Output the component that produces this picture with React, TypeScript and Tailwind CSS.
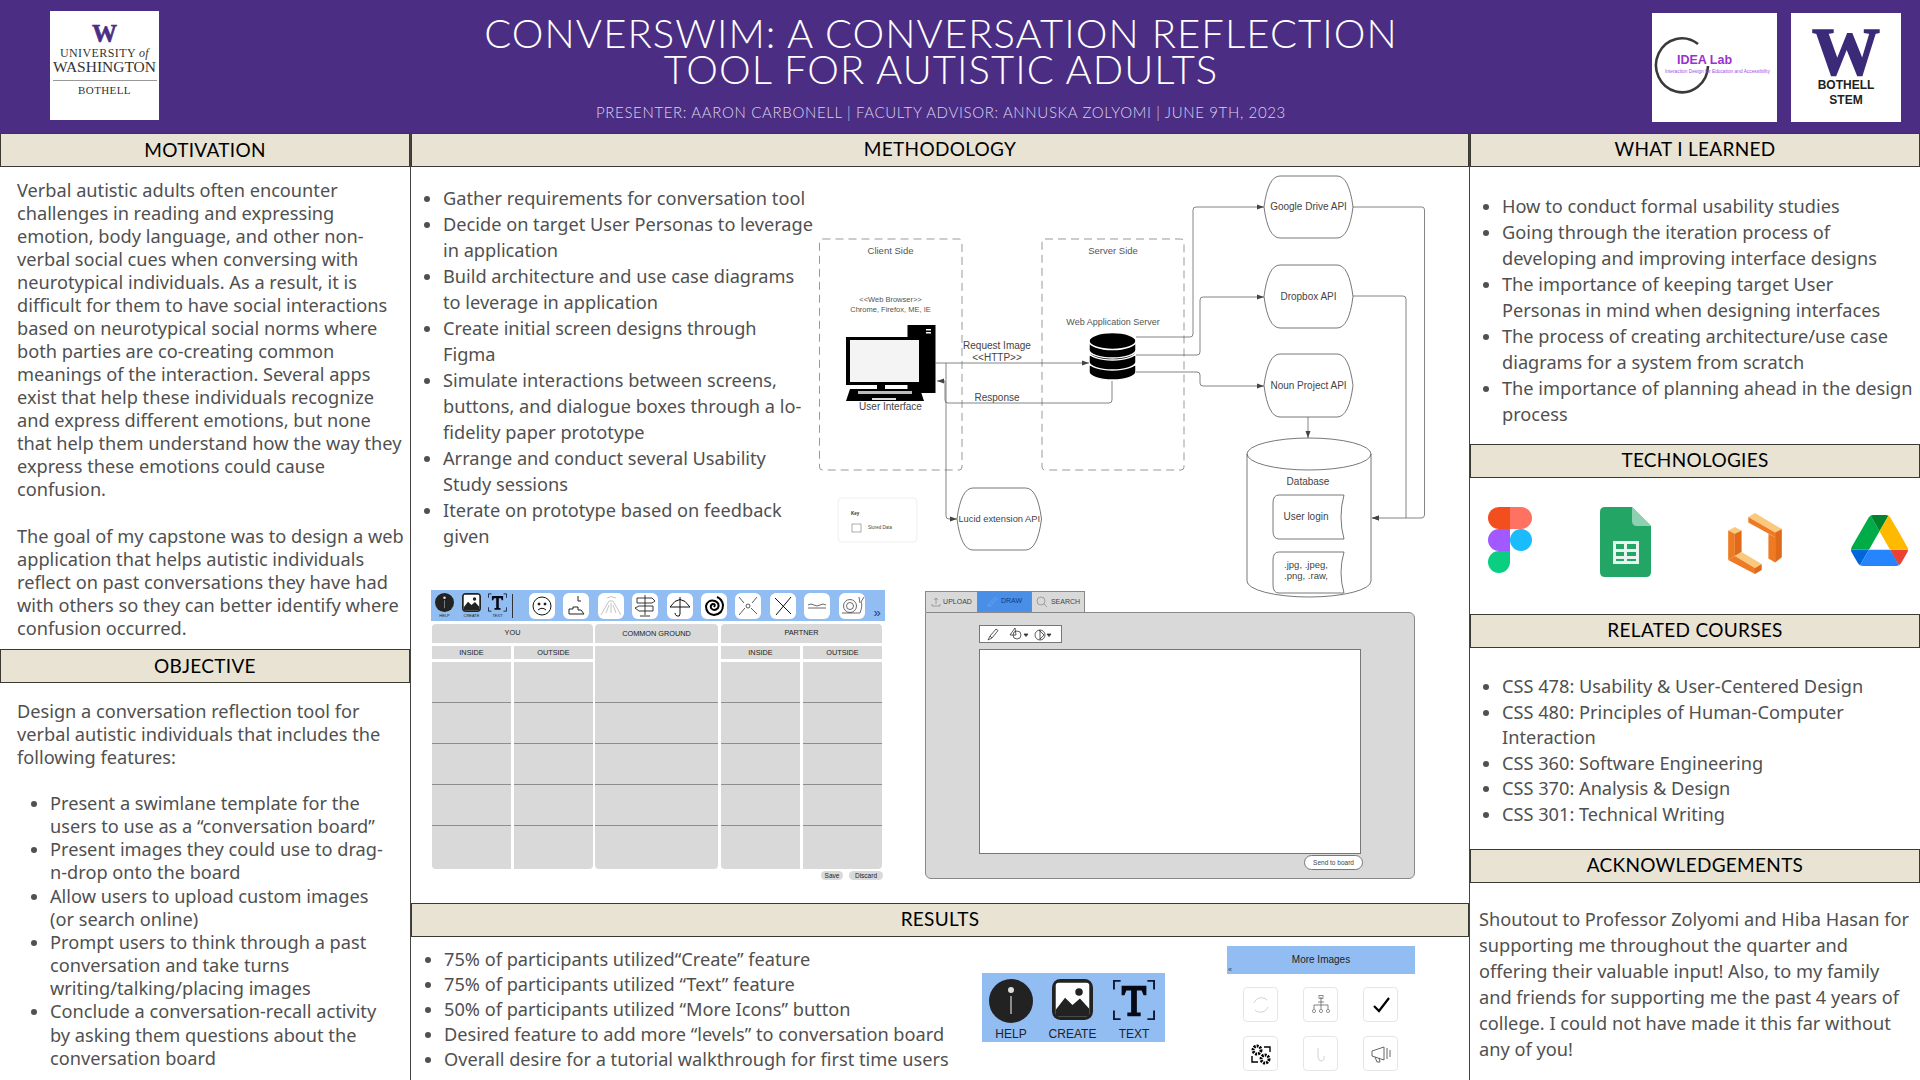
import type { ReactNode } from "react";

const motivationOne =
  "Verbal autistic adults often encounter challenges in reading and expressing emotion, body language, and other non-verbal social cues when conversing with neurotypical individuals. As a result, it is difficult for them to have social interactions based on neurotypical social norms where both parties are co-creating common meanings of the interaction. Several apps exist that help these individuals recognize and express different emotions, but none that help them understand how the way they express these emotions could cause confusion.";
const motivationTwo =
  "The goal of my capstone was to design a web application that helps autistic individuals reflect on past conversations they have had with others so they can better identify where confusion occurred.";

const objectives = [
  "Present a swimlane template for the users to use as a “conversation board”",
  "Present images they could use to drag-n-drop onto the board",
  "Allow users to upload custom images (or search online)",
  "Prompt users to think through a past conversation and take turns writing/talking/placing images",
  "Conclude a conversation-recall activity by asking them questions about the conversation board",
];

const methods = [
  "Gather requirements for conversation tool",
  "Decide on target User Personas to leverage in application",
  "Build architecture and use case diagrams to leverage in application",
  "Create initial screen designs through Figma",
  "Simulate interactions between screens, buttons, and dialogue boxes through a lo-fidelity paper prototype",
  "Arrange and conduct several Usability Study sessions",
  "Iterate on prototype based on feedback given",
];

const results = [
  "75% of participants utilized“Create” feature",
  "75% of participants utilized “Text” feature",
  "50% of participants utilized “More Icons” button",
  "Desired feature to add more “levels” to conversation board",
  "Overall desire for a tutorial walkthrough for first time users",
];

const learned = [
  "How to conduct formal usability studies",
  "Going through the iteration process of developing and improving interface designs",
  "The importance of keeping target User Personas in mind when designing interfaces",
  "The process of creating architecture/use case diagrams for a system from scratch",
  "The importance of planning ahead in the design process",
];

const courses = [
  "CSS 478: Usability & User-Centered Design",
  "CSS 480: Principles of Human-Computer Interaction",
  "CSS 360: Software Engineering",
  "CSS 370: Analysis & Design",
  "CSS 301: Technical Writing",
];

function SectionHeader({ children }: { children: ReactNode }) {
  return (
    <div className="h-[34px] shrink-0 flex items-center justify-center pb-[2px] bg-[#e8e3d3] border border-[#3a3a32] font-['Lato',sans-serif] text-[19px] text-black tracking-[0.3px]">
      {children}
    </div>
  );
}

function Bullets({ items, className }: { items: string[]; className: string }) {
  return (
    <ul className={`list-disc ${className}`}>
      {items.map((item) => (
        <li key={item}>{item}</li>
      ))}
    </ul>
  );
}

function HelpIcon({ size }: { size: number }) {
  return (
    <svg width={size} height={size} viewBox="0 0 44 44" className="max-w-none shrink-0">
      <circle cx="22" cy="22" r="22" fill="#222" />
      <circle cx="22" cy="11" r="3" fill="#ddd" />
      <rect x="21.3" y="17" width="1.4" height="18" fill="#bbb" />
    </svg>
  );
}

function CreateIcon({ size }: { size: number }) {
  return (
    <svg width={size} height={size} viewBox="0 0 44 44" className="max-w-none shrink-0">
      <rect width="44" height="44" rx="9" fill="#222" />
      <rect x="4" y="4" width="36" height="36" rx="3" fill="#fff" />
      <circle cx="29" cy="14" r="4" fill="#222" />
      <path d="M4 33 L14 20 L22 28 L30 21 L40 32 V40 H4 Z" fill="#222" />
    </svg>
  );
}

function TextIcon({ size }: { size: number }) {
  return (
    <svg width={size} height={size} viewBox="0 0 44 44" className="max-w-none shrink-0">
      <path d="M1 11 V2 H8 M36 2 H43 V11 M1 33 V42 H8 M36 42 H43 V33" fill="none" stroke="#0b1a33" strokeWidth="2" />
      <path d="M9 7 H35 V17 H32 L30 12 H25 V35 H29 V39 H15 V35 H19 V12 H14 L12 17 H9 Z" fill="#050a14" />
    </svg>
  );
}

const toolTiles = [
  <g key="sad" fill="none" stroke="#111" strokeWidth="1">
    <circle cx="13" cy="13" r="9" />
    <circle cx="10" cy="11" r="1" fill="#111" />
    <circle cx="16" cy="11" r="1" fill="#111" />
    <path d="M9 17 Q13 13.5 17 17" />
  </g>,
  <g key="steps" fill="none" stroke="#222" strokeWidth="1">
    <path d="M15 3 V8 H18" />
    <path d="M6 21 V16 H10 V14 H15 V17 H18 L21 21 Z" />
  </g>,
  <g key="volcano" fill="none" stroke="#aaa" strokeWidth="0.7">
    <path d="M3 22 L11 8 H15 L23 22" />
    <path d="M9 5 Q13 2 18 5 M13 10 V20 M11 12 L8 20 M15 12 L18 20" />
  </g>,
  <g key="sign" fill="none" stroke="#222" strokeWidth="0.9">
    <path d="M13 2 V22 M5 5 H20 L23 8 L20 10 H5 Z M21 13 H7 L3 15 L7 18 H21 Z M8 23 H18" />
  </g>,
  <g key="umbrella" fill="none" stroke="#111" strokeWidth="1">
    <path d="M3 14 Q13 -1 23 14 Z M13 4 V21 Q13 24 10 23 Q8 22 8 20" />
  </g>,
  <g key="spiral" fill="none" stroke="#000" strokeWidth="2">
    <path d="M13 14 Q15 11 12 11 Q9 12 10 15 Q13 19 17 15 Q19 10 14 8 Q7 6 5 13 Q5 21 13 22 Q22 21 22 12 Q21 6 16 4" />
  </g>,
  <g key="burst" fill="none" stroke="#333" strokeWidth="0.8">
    <circle cx="13" cy="13" r="2" />
    <path d="M4 4 L9 10 M22 4 L17 10 M4 22 L10 15 M22 21 L16 15" />
  </g>,
  <path key="cross" d="M5 5 L21 21 M21 4 L6 22" stroke="#111" strokeWidth="1" fill="none" />,
  <path key="water" d="M4 12 Q7 10 10 12 T16 12 T22 12 M4 15 H22" stroke="#444" strokeWidth="0.8" fill="none" />,
  <g key="snail" fill="none" stroke="#444" strokeWidth="0.8">
    <circle cx="11" cy="13" r="6.5" />
    <circle cx="11" cy="13" r="3.5" />
    <path d="M3 20 H21 Q24 12 22 9 M22 9 L25 4 M21 10 L20 4" />
  </g>,
];

function Board() {
  const lanes = (
    <div className="flex flex-col">
      {[0, 1, 2, 3, 4].map((i) => (
        <div key={i} className="h-[41px] last:h-[43px] border-b border-[#8e8e8e] last:border-b-0" />
      ))}
    </div>
  );
  return (
    <div className="w-[454px] ml-[20px] font-['Liberation_Sans',sans-serif] text-[#222]">
      <div className="h-[31px] bg-[#92bdf3] flex items-center pl-[4px]">
        <div className="flex flex-col items-center w-[19px] mr-[8px]">
          <HelpIcon size={19} />
          <span className="text-[4px] leading-[7px]">HELP</span>
        </div>
        <div className="flex flex-col items-center w-[19px] mr-[7px]">
          <CreateIcon size={19} />
          <span className="text-[4px] leading-[7px]">CREATE</span>
        </div>
        <div className="flex flex-col items-center w-[19px]">
          <TextIcon size={19} />
          <span className="text-[4px] leading-[7px]">TEXT</span>
        </div>
        <div className="w-px h-[24px] bg-[#333] ml-[5px] mr-[16px]" />
        <div className="flex gap-[8.4px]">
          {toolTiles.map((tile, i) => (
            <div key={i} className="w-[26px] h-[26px] shrink-0 rounded-[6px] bg-white">
              <svg width="26" height="26" viewBox="0 0 26 26">
                {tile}
              </svg>
            </div>
          ))}
        </div>
        <span className="ml-[9px] mt-[14px] text-[13px] leading-none text-[#1b3f8f]">»</span>
      </div>

      <div className="flex gap-[2px] mt-[3px] pl-px pr-[2px] text-[7.3px] text-center">
        <div className="w-[161px] flex flex-col gap-[3px]">
          <div className="h-[19px] leading-[17px] rounded-t-[4px] bg-[#d9d9d9]">YOU</div>
          <div className="flex gap-[3px]">
            <div className="w-[79px]">
              <div className="h-[13px] leading-[13px] bg-[#d9d9d9] mb-[3px]">INSIDE</div>
              <div className="bg-[#d9d9d9] rounded-bl-[4px]">{lanes}</div>
            </div>
            <div className="w-[79px]">
              <div className="h-[13px] leading-[13px] bg-[#d9d9d9] mb-[3px]">OUTSIDE</div>
              <div className="bg-[#d9d9d9] rounded-br-[4px]">{lanes}</div>
            </div>
          </div>
        </div>
        <div className="w-[123px] flex flex-col gap-[3px]">
          <div className="h-[19px] leading-[19px] rounded-t-[4px] bg-[#d9d9d9]">COMMON GROUND</div>
          <div className="bg-[#d9d9d9] rounded-b-[4px] pt-[16px]">{lanes}</div>
        </div>
        <div className="w-[161px] flex flex-col gap-[3px] ml-px">
          <div className="h-[19px] leading-[17px] rounded-t-[4px] bg-[#d9d9d9]">PARTNER</div>
          <div className="flex gap-[3px]">
            <div className="w-[79px]">
              <div className="h-[13px] leading-[13px] bg-[#d9d9d9] mb-[3px]">INSIDE</div>
              <div className="bg-[#d9d9d9] rounded-bl-[4px]">{lanes}</div>
            </div>
            <div className="w-[79px]">
              <div className="h-[13px] leading-[13px] bg-[#d9d9d9] mb-[3px]">OUTSIDE</div>
              <div className="bg-[#d9d9d9] rounded-br-[4px]">{lanes}</div>
            </div>
          </div>
        </div>
      </div>

      <div className="flex justify-end gap-[6px] mt-[2px] pr-[2px] text-[6.5px]">
        <span className="h-[9px] w-[22px] leading-[9px] text-center rounded-full bg-[#d9d9d9]">Save</span>
        <span className="h-[9px] w-[34px] leading-[9px] text-center rounded-full bg-[#d9d9d9]">Discard</span>
      </div>
    </div>
  );
}

function DrawPanel() {
  return (
    <div className="w-[490px] ml-[40px] mt-px font-['Liberation_Sans',sans-serif] text-[#444]">
      <div className="flex h-[21px] items-center text-[7px]">
        <div className="w-[53px] h-full flex items-center justify-center gap-[2px] bg-[#d9d9d9] border border-b-0 border-[#888]">
          <svg width="10" height="10" viewBox="0 0 10 10" fill="none" stroke="#777" strokeWidth="0.6">
            <path d="M5 7 V1 M3 3 L5 1 L7 3 M1 7 V9 H9 V7" />
          </svg>
          UPLOAD
        </div>
        <div className="w-[53px] h-full flex items-center justify-center gap-[3px] bg-[#4a8fe7] text-[#0b3a86] border-b border-[#888]">
          <svg width="11" height="11" viewBox="0 0 11 11" fill="none" stroke="#6fa9ee" strokeWidth="0.7">
            <path d="M1 9 L8 1.5 L10 3 L3 10 L1 10 Z" />
          </svg>
          DRAW
        </div>
        <div className="w-[54px] h-full flex items-center justify-center gap-[3px] bg-[#d9d9d9] border border-b-0 border-[#888]">
          <svg width="12" height="12" viewBox="0 0 12 12" fill="none" stroke="#777" strokeWidth="0.6">
            <circle cx="5" cy="5" r="4" />
            <path d="M8 8 L11 11" />
          </svg>
          SEARCH
        </div>
      </div>
      <div className="h-[267px] bg-[#d9d9d9] border border-[#888] rounded-b-[6px] rounded-tr-[6px] pt-[12px] pl-[53px] pr-[53px]">
        <div className="w-[83px] h-[18px] bg-white border border-[#777] flex items-center pl-[7px]">
          <svg width="72" height="14" viewBox="0 0 72 14" fill="none" stroke="#333" strokeWidth="0.8">
            <path d="M1 13 L3 9 L9 2 L11 3.5 L5 11 Z M3 9 L5 11" />
            <path d="M28 1 L23 8 H29 Z" />
            <circle cx="30" cy="8" r="4" />
            <path d="M37 7 H41 L39 9.5 Z" fill="#333" />
            <circle cx="53" cy="8" r="5" />
            <path d="M52 3 L57 8 L53 12 M53 3 V13" />
            <path d="M60 7 H64 L62 9.5 Z" fill="#333" />
          </svg>
        </div>
        <div className="h-[205px] w-[382px] mt-[6px] bg-white border border-[#777]" />
        <div className="flex justify-end w-[384px] mt-px">
          <span className="w-[59px] h-[15px] leading-[13px] text-center text-[6.5px] rounded-full bg-white border border-[#777]">
            Send to board
          </span>
        </div>
      </div>
    </div>
  );
}

// left and right sides bulge like the Lucid "stored data" shape
function ApiShape({ x, y, w, h, label, size = 10 }: { x: number; y: number; w: number; h: number; label: string; size?: number }) {
  const c = 10;
  return (
    <g>
      <path
        d={`M${x + c + 6} ${y} H${x + w - c - 6} Q${x + w - 4} ${y} ${x + w} ${y + h / 2} Q${x + w - 4} ${y + h} ${x + w - c - 6} ${y + h} H${x + c + 6} Q${x + 4} ${y + h} ${x} ${y + h / 2} Q${x + 4} ${y} ${x + c + 6} ${y} Z`}
        fill="#fff"
        stroke="#555"
        strokeWidth="0.8"
      />
      <text x={x + w / 2} y={y + h / 2 + 3} textAnchor="middle" fontSize={size} fill="#444">
        {label}
      </text>
    </g>
  );
}

function Arrow({ d, tip }: { d: string; tip: string }) {
  return (
    <g>
      <path d={d} fill="none" stroke="#666" strokeWidth="0.8" />
      <polygon points={tip} fill="#444" />
    </g>
  );
}

function DataShape({ x, y, w, h }: { x: number; y: number; w: number; h: number }) {
  return (
    <path
      d={`M${x + 6} ${y} H${x + w} Q${x + w - 6} ${y + h / 2} ${x + w} ${y + h} H${x + 6} Q${x} ${y + h} ${x} ${y + h - 8} V${y + 8} Q${x} ${y} ${x + 6} ${y} Z`}
      fill="#fff"
      stroke="#555"
      strokeWidth="0.8"
    />
  );
}

function Diagram() {
  return (
    <svg width="640" height="440" viewBox="800 160 640 440" className="font-['Liberation_Sans',sans-serif] shrink-0 max-w-none -mt-[7px] -ml-[13px]">
      <rect x="819.5" y="239" width="142.5" height="231" rx="3" fill="none" stroke="#999" strokeWidth="1" strokeDasharray="8 5" />
      <rect x="1042" y="239" width="142" height="231" rx="3" fill="none" stroke="#999" strokeWidth="1" strokeDasharray="8 5" />

      <text x="890.5" y="254" textAnchor="middle" fontSize="9.5" fill="#555">Client Side</text>
      <text x="1113" y="254" textAnchor="middle" fontSize="9.5" fill="#555">Server Side</text>
      <text x="890.5" y="302" textAnchor="middle" fontSize="7.5" fill="#555">{"<<Web Browser>>"}</text>
      <text x="890.5" y="312" textAnchor="middle" fontSize="7.5" fill="#555">Chrome, Firefox, ME, IE</text>
      <text x="1113" y="325" textAnchor="middle" fontSize="9" fill="#555">Web Application Server</text>
      <text x="997" y="349" textAnchor="middle" fontSize="10" fill="#444">Request Image</text>
      <text x="997" y="361" textAnchor="middle" fontSize="10" fill="#444">{"<<HTTP>>"}</text>
      <text x="997" y="401" textAnchor="middle" fontSize="10" fill="#444">Response</text>
      <text x="890.5" y="410" textAnchor="middle" fontSize="10" fill="#444">User Interface</text>

      {/* computer */}
      <rect x="907.5" y="325" width="28" height="68" fill="#000" />
      <rect x="926" y="329" width="5" height="1.5" fill="#fff" />
      <rect x="926" y="332" width="5" height="1.5" fill="#fff" />
      <rect x="846" y="337" width="77" height="48" fill="#000" />
      <rect x="850" y="340" width="69" height="42" fill="#f4f4f4" />
      <rect x="877" y="385" width="8" height="4" fill="#000" />
      <path d="M850 389 H920 L924 401 H846 Z" fill="#000" />
      <rect x="858" y="391" width="54" height="3" fill="#bbb" />
      <rect x="872" y="398" width="24" height="2" fill="#ddd" />

      {/* server icon */}
      <g fill="#000" stroke="#fff" strokeWidth="1.5">
        <path d="M1089 365 V372 A23.5 8 0 0 0 1136 372 V365 Z" />
        <path d="M1089 355 V362 A23.5 8 0 0 0 1136 362 V355 Z" />
        <path d="M1089 345 V352 A23.5 8 0 0 0 1136 352 V345 Z" />
        <path d="M1089 341 V350 A23.5 8 0 0 0 1136 350 V341" />
        <ellipse cx="1112.5" cy="341" rx="23.5" ry="8.5" />
      </g>

      <Arrow d="M1136 337 H1190 Q1193 337 1193 334 V210 Q1193 207 1196 207 H1264" tip="1264,207 1257,204.5 1257,209.5" />
      <Arrow d="M1136 355 H1197 Q1200 355 1200 352 V300 Q1200 297 1203 297 H1264" tip="1264,297 1257,294.5 1257,299.5" />
      <Arrow d="M1136 372 H1197 Q1200 372 1200 375 V383 Q1200 386 1203 386 H1264" tip="1264,386 1257,383.5 1257,388.5" />
      <Arrow d="M935 363 H1089" tip="1089,363 1082,360.5 1082,365.5" />
      <Arrow d="M1112 381 V400 Q1112 403 1109 403 H948 Q945 403 945 400 V381 H937" tip="937,381 944,378.5 944,383.5" />
      <Arrow d="M946 363 V516 Q946 519 949 519 H957" tip="957,519 950,516.5 950,521.5" />
      <Arrow d="M1353 207 H1422 Q1424.5 207 1424.5 210 V515 Q1424.5 518 1421 518 H1372" tip="1372,518 1379,515.5 1379,520.5" />
      <Arrow d="M1353 296 H1403 Q1406 296 1406 299 V518" tip="1372,518 1379,515.5 1379,520.5" />
      <Arrow d="M1308 417 V438" tip="1308,438 1305.5,431 1310.5,431" />

      <ApiShape x={1264} y={176} w={89} h={62} label="Google Drive API" />
      <ApiShape x={1264} y={265} w={89} h={63} label="Dropbox API" />
      <ApiShape x={1264} y={354} w={89} h={63} label="Noun Project API" />
      <ApiShape x={957} y={488} w={84.5} h={62} label="Lucid extension API" size={9.3} />

      {/* database cylinder */}
      <path d="M1247 454 A62 16 0 0 1 1371 454 V581 A62 16 0 0 1 1247 581 Z" fill="#fff" stroke="#555" strokeWidth="0.8" />
      <path d="M1247 454 A62 16 0 0 0 1371 454" fill="none" stroke="#555" strokeWidth="0.8" />
      <text x="1308" y="485" textAnchor="middle" fontSize="10" fill="#444">Database</text>
      <DataShape x={1273} y={495} w={71} h={44} />
      <text x="1306" y="520" textAnchor="middle" fontSize="10" fill="#444">User login</text>
      <DataShape x={1273} y={552} w={71} h={41} />
      <text x="1306" y="568" textAnchor="middle" fontSize="9.5" fill="#444">.jpg, .jpeg,</text>
      <text x="1306" y="579" textAnchor="middle" fontSize="9.5" fill="#444">.png, .raw,</text>

      {/* key */}
      <rect x="838" y="498" width="79" height="44" rx="4" fill="#fff" stroke="#eee" />
      <text x="851" y="515" fontSize="4.5" fontWeight="bold" fill="#333">Key</text>
      <rect x="852" y="524" width="9" height="8" fill="none" stroke="#777" strokeWidth="0.6" />
      <text x="868" y="529" fontSize="4.5" fill="#444">Stored Data</text>
    </svg>
  );
}

function MoreImageTile({ children }: { children: ReactNode }) {
  return (
    <div className="w-[35px] h-[35px] rounded-[4px] border border-[#e6e6e6] flex items-center justify-center">
      <svg width="24" height="24" viewBox="0 0 24 24">
        {children}
      </svg>
    </div>
  );
}

function ResultsFigures() {
  return (
    <div className="font-['Liberation_Sans',sans-serif] text-[#222] relative">
      <div className="absolute left-[571px] top-[36px] w-[183px] h-[69px] bg-[#92bdf3] flex pt-[6px] pl-[7px]">
        <div className="flex flex-col items-center w-[44px]">
          <HelpIcon size={44} />
          <span className="text-[12px] leading-[14px] mt-[4px]">HELP</span>
        </div>
        <div className="flex flex-col items-center w-[41px] ml-[19px]">
          <CreateIcon size={41} />
          <span className="text-[12px] leading-[14px] mt-[7px]">CREATE</span>
        </div>
        <div className="flex flex-col items-center w-[42px] ml-[20px]">
          <TextIcon size={42} />
          <span className="text-[12px] leading-[14px] mt-[6px]">TEXT</span>
        </div>
      </div>
      <div className="absolute left-[816px] top-[9px] w-[188px]">
        <div className="relative h-[28px] bg-[#92bdf3] flex items-center justify-center pb-[2px] text-[10px]">
          More Images
          <span className="absolute left-[1px] bottom-0 text-[7px] leading-[9px] text-[#1b3f8f]">«</span>
        </div>
        <div className="grid grid-cols-3 gap-x-[25px] gap-y-[14px] pl-[16px] pr-[17px] mt-[13px]">
          <MoreImageTile>
            <path d="M5 10 A8 8 0 0 1 18 7 M19 14 A8 8 0 0 1 6 17" fill="none" stroke="#ccc" strokeWidth="0.9" />
          </MoreImageTile>
          <MoreImageTile>
            <path d="M12 4 V9 M5 16 V12 H19 V16 M12 9 V16 M9 9 H15" fill="none" stroke="#666" strokeWidth="0.8" />
            <rect x="10" y="2.5" width="4" height="3" fill="none" stroke="#666" strokeWidth="0.7" />
            <circle cx="5" cy="18" r="1.6" fill="none" stroke="#666" strokeWidth="0.7" />
            <circle cx="12" cy="18" r="1.6" fill="none" stroke="#666" strokeWidth="0.7" />
            <circle cx="19" cy="18" r="1.6" fill="none" stroke="#666" strokeWidth="0.7" />
          </MoreImageTile>
          <MoreImageTile>
            <path d="M5 13 L10 18 L20 5" fill="none" stroke="#000" strokeWidth="2.2" />
          </MoreImageTile>
          <MoreImageTile>
            <circle cx="8" cy="8" r="4" fill="none" stroke="#000" strokeWidth="3" strokeDasharray="2 1" />
            <circle cx="16" cy="17" r="4" fill="none" stroke="#000" strokeWidth="3" strokeDasharray="2 1" />
            <path d="M15 5 H21 V10 M3 14 V20 H9" fill="none" stroke="#000" strokeWidth="1.4" />
          </MoreImageTile>
          <MoreImageTile>
            <path d="M9 6 V15 Q10 20 13 19 Q16 18 15 14" fill="none" stroke="#ccc" strokeWidth="0.9" />
          </MoreImageTile>
          <MoreImageTile>
            <path d="M3 9 L15 5 V18 L3 14 Z M6 15 L8 20 H11 L10 16 M18 6 V17 M21 8 V15" fill="none" stroke="#666" strokeWidth="1" />
          </MoreImageTile>
        </div>
      </div>
    </div>
  );
}

function FigmaLogo() {
  return (
    <svg width="44" height="66" viewBox="0 0 44 66">
      <path d="M0 11 A11 11 0 0 1 11 0 H22 V22 H11 A11 11 0 0 1 0 11" fill="#f24e1e" />
      <path d="M22 0 H33 A11 11 0 0 1 33 22 H22 Z" fill="#ff7262" />
      <path d="M0 33 A11 11 0 0 1 11 22 H22 V44 H11 A11 11 0 0 1 0 33" fill="#a259ff" />
      <circle cx="33" cy="33" r="11" fill="#1abcfe" />
      <path d="M0 55 A11 11 0 0 1 11 44 H22 V55 A11 11 0 0 1 0 55" fill="#0acf83" />
    </svg>
  );
}

function SheetsLogo() {
  return (
    <svg width="51" height="70" viewBox="0 0 51 70">
      <path d="M5 0 H32 L51 19 V65 Q51 70 46 70 H5 Q0 70 0 65 V5 Q0 0 5 0 Z" fill="#23a566" />
      <path d="M32 0 L51 19 H37 Q32 19 32 14 Z" fill="#8ed1b1" />
      <path d="M13 34 H39 V57 H13 Z M16 37 V42 H24 V37 Z M27 37 V42 H36 V37 Z M16 45 V49 H24 V45 Z M27 45 V49 H36 V45 Z M16 52 V54 H24 V52 Z M27 52 V54 H36 V52 Z" fill="#e8f5ee" fillRule="evenodd" />
    </svg>
  );
}

function OrangeLogo() {
  return (
    <svg width="54" height="61" viewBox="0 0 160 182">
      <polygon points="0,52 20,42 40,52 20,62" fill="#f9c97e" />
      <polygon points="0,52 20,62 20,128 0,140" fill="#ee7a23" />
      <polygon points="20,62 40,52 40,116 20,128" fill="#de6a1a" />
      <polygon points="20,128 40,116 100,152 80,164" fill="#f9c97e" />
      <polygon points="0,140 20,128 80,164 80,182" fill="#ee7a23" />
      <polygon points="80,164 100,152 100,170 80,182" fill="#de6a1a" />
      <polygon points="60,12 80,0 160,48 140,58" fill="#f9c97e" />
      <polygon points="60,12 140,58 140,72 60,28" fill="#ee7a23" />
      <polygon points="140,58 160,48 160,132 140,148" fill="#de6a1a" />
      <polygon points="120,62 140,72 140,148 120,136" fill="#ee7a23" />
    </svg>
  );
}

function DriveLogo() {
  return (
    <svg width="57" height="51" viewBox="0 0 87.3 78">
      <path d="m6.6 66.85 3.85 6.65c.8 1.4 1.95 2.5 3.3 3.3l13.75-23.8h-27.5c0 1.55.4 3.1 1.2 4.5z" fill="#0066da" />
      <path d="m43.65 25-13.75-23.8c-1.35.8-2.5 1.9-3.3 3.3l-25.4 44a9.06 9.06 0 0 0 -1.2 4.5h27.5z" fill="#00ac47" />
      <path d="m73.55 76.8c1.35-.8 2.5-1.9 3.3-3.3l1.6-2.75 7.65-13.25c.8-1.4 1.2-2.95 1.2-4.5h-27.502l5.852 11.5z" fill="#ea4335" />
      <path d="m43.65 25 13.75-23.8c-1.35-.8-2.9-1.2-4.5-1.2h-18.5c-1.6 0-3.15.45-4.5 1.2z" fill="#00832d" />
      <path d="m59.8 53h-32.3l-13.75 23.8c1.35.8 2.9 1.2 4.5 1.2h50.8c1.6 0 3.15-.45 4.5-1.2z" fill="#2684fc" />
      <path d="m73.4 26.5-12.7-22c-.8-1.4-1.95-2.5-3.3-3.3l-13.75 23.8 16.15 28h27.45c0-1.55-.4-3.1-1.2-4.5z" fill="#ffba00" />
    </svg>
  );
}

function Header() {
  return (
    <header className="h-[133px] shrink-0 bg-[#4b2e83] flex items-start">
      <div className="ml-[50px] mt-[11px] w-[109px] h-[109px] bg-white flex flex-col items-center pt-[15px] font-['Liberation_Serif',serif] text-[#333]">
        <span className="text-[25px] leading-[16px] font-bold text-[#4b2e83] [-webkit-text-stroke:0.6px_#4b2e83]">W</span>
        <span className="text-[12px] leading-[14px] mt-[4px] tracking-[0.4px]">
          UNIVERSITY <i>of</i>
        </span>
        <span className="text-[15.5px] leading-[14px] w-[104px] text-center pb-[6px] border-b border-[#999] whitespace-nowrap">WASHINGTON</span>
        <span className="text-[11px] leading-[13px] mt-[3px] tracking-[0.4px]">BOTHELL</span>
      </div>

      <div className="ml-[282px] w-[1000px] text-center text-white font-['Lato',sans-serif]">
        <h1 className="mt-[15px] text-[40px] leading-[36px] font-light tracking-[1.07px]">
          CONVERSWIM: A CONVERSATION REFLECTION
          <br />
          TOOL FOR AUTISTIC ADULTS
        </h1>
        <p className="mt-[15px] text-[15px] leading-[20px] font-light tracking-[0.65px] text-[#dcd3ee]">
          PRESENTER: AARON CARBONELL | FACULTY ADVISOR: ANNUSKA ZOLYOMI | JUNE 9TH, 2023
        </p>
      </div>

      <div className="ml-[211px] mt-[13px] w-[125px] h-[109px] bg-white relative font-['Liberation_Sans',sans-serif]">
        <svg width="125" height="109" viewBox="0 0 125 109" className="absolute left-0 top-0">
          <path d="M46 31 A26 27 0 1 0 56 53" fill="none" stroke="#3a3a3a" strokeWidth="2.6" />
        </svg>
        <span className="absolute left-[25px] top-[40px] text-[12.5px] leading-[14px] font-bold text-[#9b30d0]">IDEA Lab</span>
        <span className="absolute left-[13px] top-[55px] text-[4.8px] leading-[8px] whitespace-nowrap text-[#a050e0]">
          Interaction Design for Education and Accessibility
        </span>
      </div>
      <div className="ml-[14px] mt-[13px] w-[110px] h-[109px] bg-white flex flex-col items-center pt-[13px]">
        <span className="font-['Liberation_Serif',serif] text-[68px] leading-[50px] font-bold text-[#3b2a78] [-webkit-text-stroke:1.5px_#3b2a78]">W</span>
        <span className="mt-[2px] font-['Liberation_Sans',sans-serif] text-[12px] leading-[15px] font-bold text-[#222] text-center">
          BOTHELL
          <br />
          STEM
        </span>
      </div>
    </header>
  );
}

export default function App() {
  return (
    <div className="w-[1920px] h-[1080px] overflow-hidden flex flex-col bg-white font-['Noto_Sans',sans-serif] text-[18.2px] text-[#505050]">
      <Header />

      <main className="flex flex-1 min-h-0">
        {/* Left column */}
        <section className="w-[411px] shrink-0 flex flex-col leading-[23px] border-r border-[#444]">
          <SectionHeader>MOTIVATION</SectionHeader>
          <div className="h-[482px] pt-[12px] pl-[17px] pr-[4px]">
            <p>{motivationOne}</p>
            <p className="mt-[24px]">{motivationTwo}</p>
          </div>
          <SectionHeader>OBJECTIVE</SectionHeader>
          <div className="pt-[17px] pl-[17px] pr-[10px]">
            <p>Design a conversation reflection tool for verbal autistic individuals that includes the following features:</p>
            <Bullets items={objectives} className="mt-[23px] pl-[33px] pr-[2px] w-[369px] leading-[23.15px]" />
          </div>
        </section>

        {/* Middle column */}
        <section className="w-[1058px] shrink-0 flex flex-col">
          <SectionHeader>METHODOLOGY</SectionHeader>
          <div className="h-[423px] flex">
            <div className="w-[402px] shrink-0 pt-[18px] leading-[26px]">
              <Bullets items={methods} className="pl-[32px]" />
            </div>
            <Diagram />
          </div>
          <div className="h-[313px] flex">
            <Board />
            <DrawPanel />
          </div>
          <SectionHeader>RESULTS</SectionHeader>
          <div className="relative pt-[10px] leading-[25px]">
            <Bullets items={results} className="pl-[33px]" />
            <div className="absolute left-0 top-0">
              <ResultsFigures />
            </div>
          </div>
        </section>

        {/* Right column */}
        <section className="flex-1 flex flex-col leading-[26px] border-l border-[#444]">
          <SectionHeader>WHAT I LEARNED</SectionHeader>
          <div className="h-[277px] pt-[26px] pr-[7px]">
            <Bullets items={learned} className="pl-[32px]" />
          </div>
          <SectionHeader>TECHNOLOGIES</SectionHeader>
          <div className="h-[136px] flex items-start pl-[18px] pt-[29px]">
            <FigmaLogo />
            <div className="ml-[68px]">
              <SheetsLogo />
            </div>
            <div className="ml-[77px] mt-[6px]">
              <OrangeLogo />
            </div>
            <div className="ml-[69px] mt-[8px]">
              <DriveLogo />
            </div>
          </div>
          <SectionHeader>RELATED COURSES</SectionHeader>
          <div className="h-[201px] pt-[26px] pr-[8px] leading-[25.6px]">
            <Bullets items={courses} className="pl-[32px]" />
          </div>
          <SectionHeader>ACKNOWLEDGEMENTS</SectionHeader>
          <p className="pt-[23px] pl-[9px] pr-[6px]">
            Shoutout to Professor Zolyomi and Hiba Hasan for supporting me throughout the quarter and offering their valuable input! Also, to my family and friends for supporting me the past 4 years of college. I could not have made it this far without any of you!
          </p>
        </section>
      </main>
    </div>
  );
}
